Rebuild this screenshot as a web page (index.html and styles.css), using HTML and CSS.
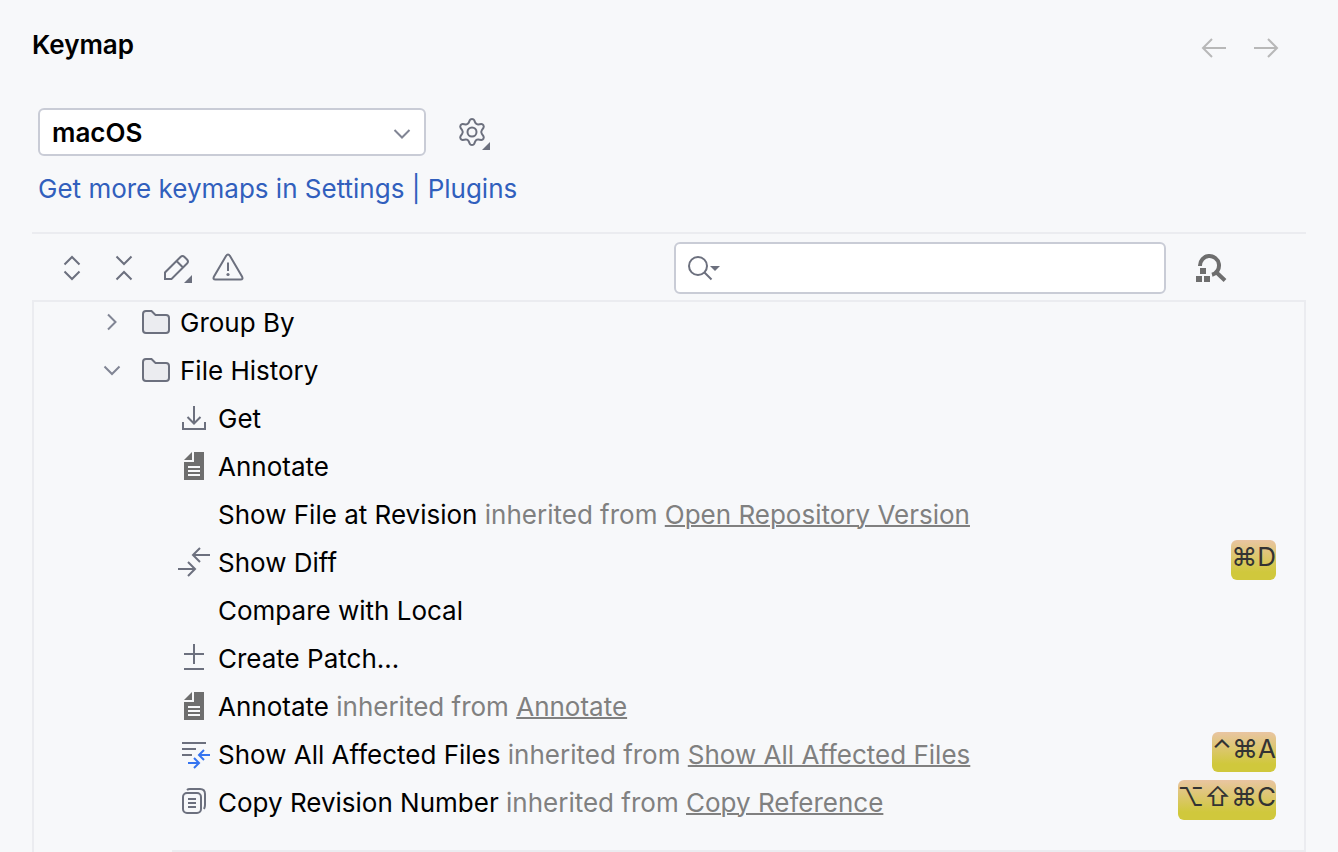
FILE: index.html
```html
<!DOCTYPE html>
<html lang="en">
<head>
<meta charset="utf-8">
<title>Keymap</title>
<link rel="stylesheet" href="styles.css">
</head>
<body>
<svg class="defs" aria-hidden="true">
  <symbol id="folder" viewBox="0 0 32 32"><path d="M3 8A3 3 0 0 1 6 5H11.500L15.500 9H26A3 3 0 0 1 29 12V24A3 3 0 0 1 26 27H6A3 3 0 0 1 3 24Z" fill="#ebecf0" stroke="#6c707e" stroke-width="2"/></symbol>
  <symbol id="annotate" viewBox="0 0 32 32"><path d="M6 10 14 2V10ZM16 2H26V30H6V12H16ZM10 16V18H22V16ZM10 20V22H22V20ZM10 24V26H22V24Z" fill="#6e6e6e" fill-rule="evenodd"/></symbol>
</svg>
<main class="settings">
  <header class="header">
    <h1 class="title">Keymap</h1>
    <nav class="history">
      <button class="icon-button" aria-label="Back" disabled><svg class="icon" viewBox="0 0 32 32"><path d="M28 16H5M14 7 5 16 14 25" class="arrow"/></svg></button>
      <button class="icon-button" aria-label="Forward" disabled><svg class="icon" viewBox="0 0 32 32"><path d="M4 16H27M18 7 27 16 18 25" class="arrow"/></svg></button>
    </nav>
  </header>

  <section class="scheme">
    <div class="scheme-row">
      <div class="select-wrap">
        <select class="select" aria-label="Keymap"><option>macOS</option></select>
        <svg class="select-arrow" viewBox="0 0 32 32"><path class="thin" d="M8.500 13 16 20.500 23.500 13"/></svg>
      </div>
      <button class="icon-button" aria-label="Keymap actions"><svg class="icon" viewBox="0 0 32 32"><path class="line" d="M13.800 4.200Q14.300 3 16 3T18.200 4.200L19.300 6.800Q20.300 8.600 22.300 8.400L25.200 8Q26.600 7.900 27.400 9.300T27.400 11.900L25.800 14.200Q24.600 16 25.800 17.800L27.400 20.100Q28.200 21.300 27.400 22.700T25.200 24L22.300 23.600Q20.300 23.400 19.300 25.200L18.200 27.800Q17.700 29 16 29T13.800 27.800L12.700 25.200Q11.700 23.400 9.700 23.600L6.800 24Q5.400 24.100 4.600 22.700T4.600 20.100L6.200 17.800Q7.400 16 6.200 14.200L4.600 11.900Q3.800 10.700 4.600 9.300T6.800 8L9.700 8.400Q11.700 8.600 12.700 6.800Z"/><circle class="line" cx="16" cy="16" r="4.500"/><path class="solid" d="M34 26V34H26Z"/></svg></button>
    </div>
    <a class="link" href="#plugins">Get more keymaps in Settings | Plugins</a>
  </section>

  <div class="toolbar">
    <div class="tools">
      <button class="icon-button" aria-label="Expand all"><svg class="icon" viewBox="0 0 32 32"><path class="line" d="M8.500 12.500 16 5 23.500 12.500M8.500 19.500 16 27 23.500 19.500"/></svg></button>
      <button class="icon-button" aria-label="Collapse all"><svg class="icon" viewBox="0 0 32 32"><path class="line" d="M8.500 4.500 16 12 23.500 4.500M8.500 27.500 16 20 23.500 27.500"/></svg></button>
      <button class="icon-button" aria-label="Edit shortcut"><svg class="icon" viewBox="0 0 32 32"><path class="line" d="M5 27V20.500L20.500 5Q22.500 3 24.500 5L27 7.500Q29 9.500 27 11.500L11.500 27ZM16.500 9 23 15.500"/><path class="solid" d="M32 23V31H24Z"/></svg></button>
      <button class="icon-button" aria-label="Show conflicts"><svg class="icon" viewBox="0 0 32 32"><path class="line" d="M14 4Q16 1 18 4L30 24.500Q31.500 27.500 28.500 27.500H3.500Q.5 27.500 2 24.500ZM16 10.500V19"/><circle class="solid" cx="16" cy="22.500" r="1.600"/></svg></button>
    </div>
    <div class="search">
      <svg class="search-icon" viewBox="0 0 36 32"><circle class="line" cx="14" cy="14" r="9"/><path class="line" d="M20.500 20.500 27.500 27.500"/><path class="solid" d="M26 14H36L31 19Z"/></svg>
      <input class="search-input" type="text" aria-label="Search actions">
    </div>
    <button class="icon-button find" aria-label="Find actions by shortcut"><svg class="icon" viewBox="0 0 32 32"><path d="M6 14V13.500A9.500 9.500 0 1 1 18 22.700M21.500 19.500 31 28.500" fill="none" stroke="#6e6e6e" stroke-width="4"/><path fill="#6e6e6e" d="M6 16H12V22H6ZM2 24H8V30H2ZM10 24H16V30H10Z"/></svg></button>
  </div>

  <section class="tree-panel">
    <ul class="tree">
      <li class="row group"><button class="toggle" aria-label="Expand Group By"><svg class="icon" viewBox="0 0 32 32"><path class="thin" d="M12 8.500 19.500 16 12 23.500"/></svg></button><svg class="icon"><use href="#folder"/></svg><span class="name">Group By</span></li>
      <li class="row group"><button class="toggle" aria-label="Collapse File History"><svg class="icon" viewBox="0 0 32 32"><path class="thin" d="M8.500 12.500 16 20 23.500 12.500"/></svg></button><svg class="icon"><use href="#folder"/></svg><span class="name">File History</span></li>
      <li class="row"><svg class="icon" viewBox="0 0 32 32"><path class="line" d="M5 20V27H27V20M16 4V21M9.500 15 16 21.500 22.500 15"/></svg><span class="name">Get</span></li>
      <li class="row"><svg class="icon"><use href="#annotate"/></svg><span class="name">Annotate</span></li>
      <li class="row"><span class="icon"></span><span class="name">Show File at Revision <span class="origin">inherited from <a href="#open-repository-version">Open Repository Version</a></span></span></li>
      <li class="row"><svg class="icon" viewBox="0 0 32 32"><path class="line" d="M32 9H15M22 2 15 9 22 16M0 23H17M10 16 17 23 10 30"/></svg><span class="name">Show Diff</span><kbd class="shortcut">⌘D</kbd></li>
      <li class="row"><span class="icon"></span><span class="name">Compare with Local</span></li>
      <li class="row"><svg class="icon" viewBox="0 0 32 32"><path class="line" d="M6 12H26M16 2V22M6 27H26"/></svg><span class="name">Create Patch…</span></li>
      <li class="row"><svg class="icon"><use href="#annotate"/></svg><span class="name">Annotate <span class="origin">inherited from <a href="#annotate-action">Annotate</a></span></span></li>
      <li class="row"><svg class="icon" viewBox="0 0 32 32"><path class="line" d="M4 5H28M4 11H18M4 17H14"/><path fill="none" stroke="#3574f0" stroke-width="2" d="M32 17H21M26 12 21 17 26 22M10 25H21M16 20 21 25 16 30"/></svg><span class="name">Show All Affected Files <span class="origin">inherited from <a href="#affected-files">Show All Affected Files</a></span></span><kbd class="shortcut">⌃⌘A</kbd></li>
      <li class="row"><svg class="icon" viewBox="0 0 32 32"><rect class="line" x="5" y="7" width="18" height="20" rx="4"/><path class="line" d="M9 4Q10 3 12 3H22Q27 3 27 8V19Q27 21 26 23M10 13H18M10 17H18M10 21H18"/></svg><span class="name">Copy Revision Number <span class="origin">inherited from <a href="#copy-reference">Copy Reference</a></span></span><kbd class="shortcut">⌥⇧⌘C</kbd></li>
    </ul>
    <div class="tree-end"></div>
  </section>
</main>
</body>
</html>
```
FILE: styles.css
```css
* { box-sizing: border-box; }
body {
  margin: 0;
  background: #f7f8fa;
  color: #000;
  font: 26px/32px Inter, "Liberation Sans", sans-serif;
}
.defs { position: absolute; width: 0; height: 0; }
button, select, input { font: inherit; color: inherit; }
.settings {
  display: flex;
  flex-direction: column;
  height: 100vh;
  overflow: hidden;
  padding: 0 32px;
}
.header {
  display: flex;
  align-items: flex-start;
  justify-content: space-between;
  padding: 29px 24px 0 0;
}
.title { margin: 0; font-size: 26px; font-weight: 600; }
.history { display: flex; gap: 20px; padding-top: 3px; }
.icon-button, .toggle {
  display: block;
  padding: 0;
  border: 0;
  background: none;
}
.icon { display: block; flex: none; width: 32px; height: 32px; overflow: visible; }
.line { fill: none; stroke: #6c707e; stroke-width: 2; }
.thin { fill: none; stroke: #818594; stroke-width: 2; }
.arrow { fill: none; stroke: #b8b8b8; stroke-width: 2; }
.solid { fill: #6c707e; }
.scheme {
  padding: 44px 6px 27px;
  border-bottom: 2px solid #ebecf0;
}
.scheme-row { display: flex; align-items: center; gap: 30px; margin-bottom: 17px; }
.select-wrap { position: relative; width: 388px; }
.select {
  display: block;
  width: 100%;
  height: 48px;
  padding: 2px 12px 0;
  appearance: none;
  background: #fff;
  border: 2px solid #c9ccd6;
  border-radius: 6px;
  font-weight: 600;
}
.select-arrow {
  position: absolute;
  right: 8px;
  top: 9px;
  width: 32px;
  height: 32px;
  pointer-events: none;
}
.link { display: block; width: fit-content; color: #315fbd; text-decoration: none; }
.toolbar {
  display: flex;
  align-items: center;
  padding: 8px 80px 6px 24px;
}
.tools { display: flex; flex: 1; gap: 20px; }
.search {
  display: flex;
  align-items: center;
  width: 492px;
  height: 52px;
  padding: 0 8px;
  background: #fff;
  border: 2px solid #c9ccd6;
  border-radius: 6px;
}
.search-icon { flex: none; width: 36px; height: 32px; }
.search-input { flex: 1; min-width: 0; border: 0; outline: 0; background: none; }
.find { margin-left: 28px; }
.tree-panel {
  display: flex;
  flex: 1;
  flex-direction: column;
  min-height: 0;
  border: 2px solid #ebecf0;
  border-bottom: 0;
}
.tree { flex: 1; min-height: 0; margin: 0; padding: 0; list-style: none; overflow: hidden; }
.row {
  display: flex;
  align-items: center;
  gap: 8px;
  height: 48px;
  padding: 0 28px 0 144px;
}
.row:first-child { height: 44px; padding-bottom: 4px; }
.group { padding-left: 62px; }
.group .toggle { margin-right: 4px; }
.name { flex: 1; padding-top: 2px; white-space: nowrap; }
.origin { color: #808080; }
.origin a { color: inherit; text-decoration: underline; text-decoration-thickness: 2px; }
.shortcut {
  height: 40px;
  margin-bottom: 4px;
  border-radius: 6px;
  background: linear-gradient(#e9c5a2, #d0c83c 80%);
  color: #333;
  font: 26px/34px Inter, "DejaVu Sans", sans-serif;
}
.tree-end { height: 2px; margin-left: 138px; background: #ebecf0; }
```
